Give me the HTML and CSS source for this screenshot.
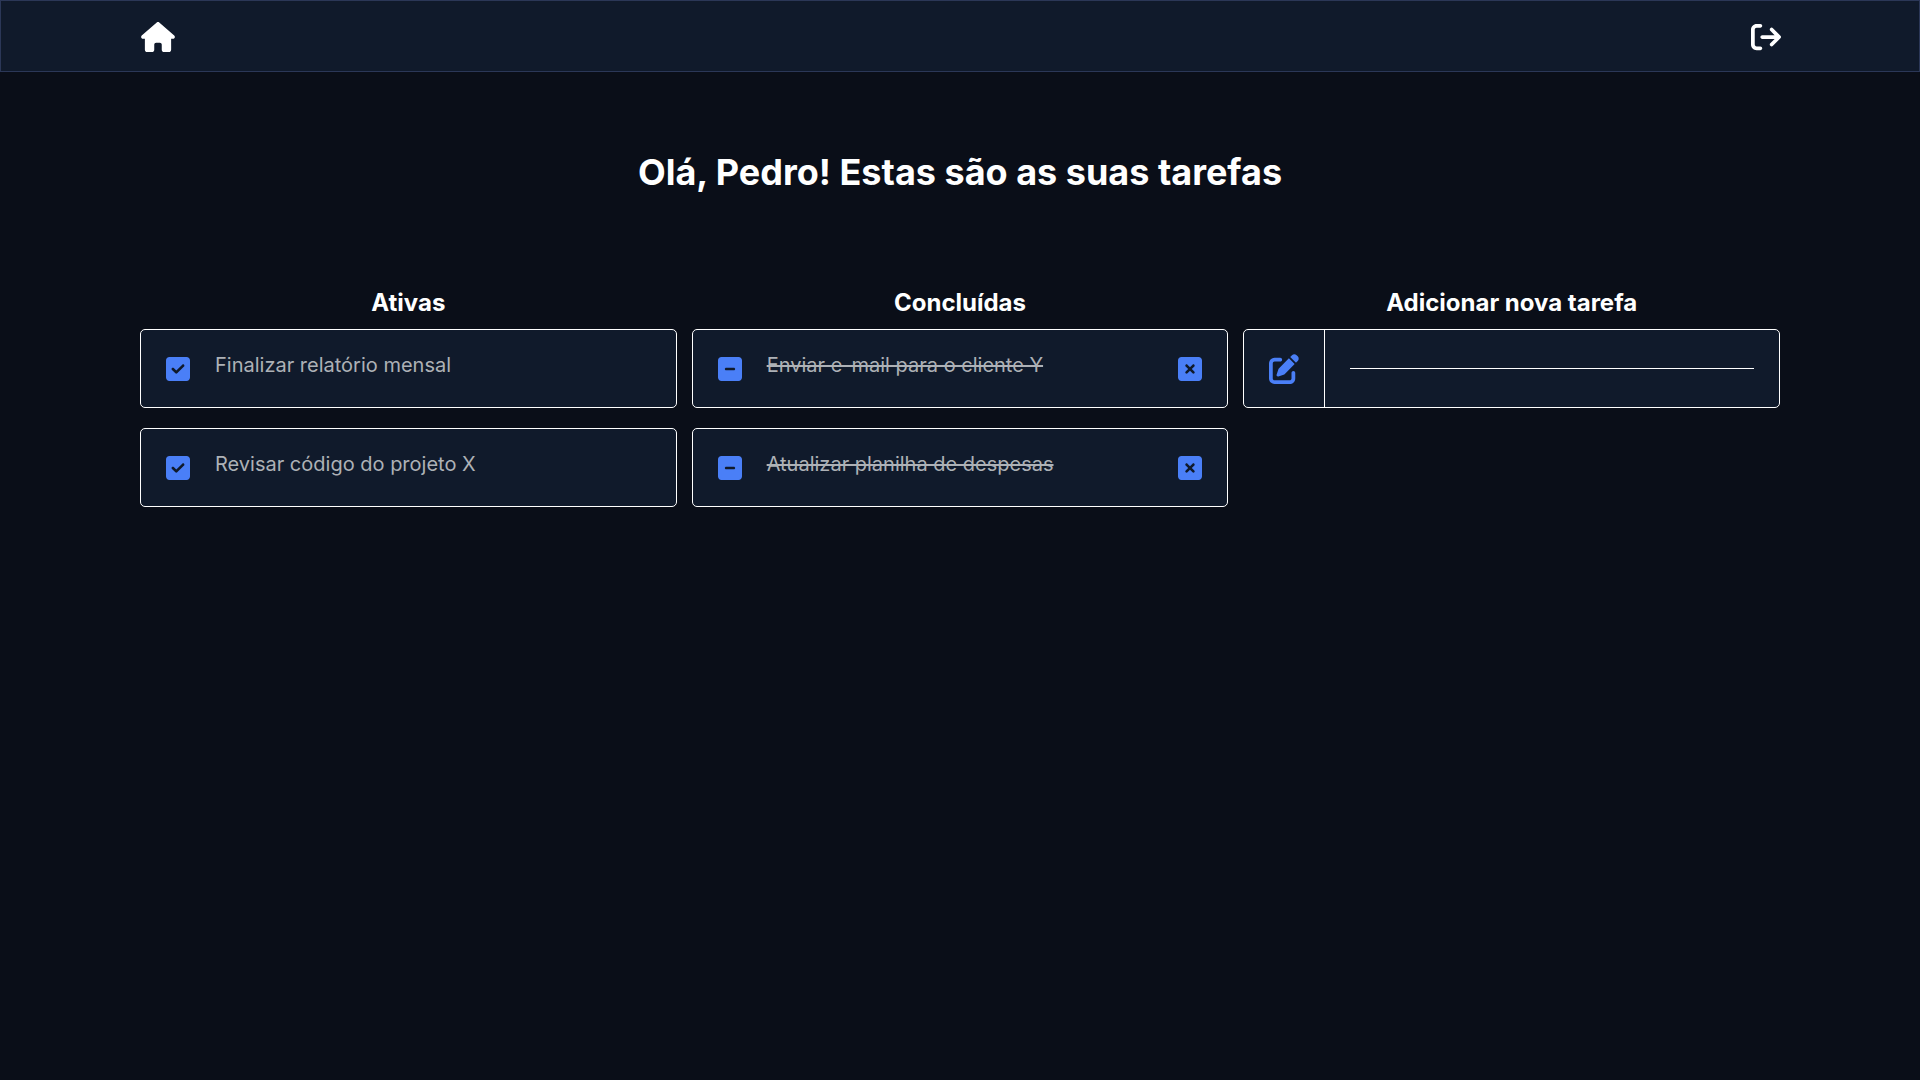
FILE: index.html
```html
<!DOCTYPE html>
<html lang="pt-BR">
<head>
<meta charset="utf-8">
<meta name="viewport" content="width=device-width, initial-scale=1">
<title>Tarefas</title>
<link rel="stylesheet" href="styles.css">
</head>
<body>
<svg class="sprite" aria-hidden="true">
  <symbol id="check" viewBox="0 32 448 448"><path d="M64 32C28.700 32 0 60.700 0 96V416c0 35.300 28.700 64 64 64H384c35.300 0 64-28.700 64-64V96c0-35.300-28.700-64-64-64H64zM337 209L209 337c-9.400 9.400-24.600 9.400-33.900 0l-64-64c-9.400-9.400-9.400-24.600 0-33.900s24.600-9.400 33.900 0l47 47L303 175c9.400-9.400 24.600-9.400 33.900 0s9.400 24.600 0 33.900z"/></symbol>
  <symbol id="minus" viewBox="0 32 448 448"><path d="M64 32C28.700 32 0 60.700 0 96V416c0 35.300 28.700 64 64 64H384c35.300 0 64-28.700 64-64V96c0-35.300-28.700-64-64-64H64zm88 200H296c13.300 0 24 10.700 24 24s-10.700 24-24 24H152c-13.300 0-24-10.700-24-24s10.700-24 24-24z"/></symbol>
  <symbol id="xmark" viewBox="0 32 448 448"><path d="M64 32C28.700 32 0 60.700 0 96V416c0 35.300 28.700 64 64 64H384c35.300 0 64-28.700 64-64V96c0-35.300-28.700-64-64-64H64zm79 143c9.400-9.400 24.600-9.400 33.900 0l47 47 47-47c9.400-9.400 24.600-9.400 33.900 0s9.400 24.600 0 33.900l-47 47 47 47c9.400 9.400 9.400 24.600 0 33.900s-24.600 9.400-33.900 0l-47-47-47 47c-9.400 9.400-24.600 9.400-33.900 0s-9.400-24.600 0-33.900l47-47-47-47c-9.400-9.400-9.400-24.600 0-33.900z"/></symbol>
</svg>

<header class="topbar">
  <a class="topbar-link" href="#" aria-label="Início">
    <svg class="icon-home" viewBox="0 0 576 512"><path d="M575.800 255.500c0 18-15 32.100-32 32.100h-32l.7 160.200c0 2.700-.2 5.400-.5 8.100V472c0 22.100-17.900 40-40 40H456c-1.100 0-2.200 0-3.300-.1c-1.400 .1-2.800 .1-4.200 .1H416 392c-22.100 0-40-17.900-40-40V448 384c0-17.700-14.300-32-32-32H256c-17.700 0-32 14.300-32 32v64 24c0 22.100-17.900 40-40 40H160 128.100c-1.500 0-3-.1-4.500-.2c-1.200 .1-2.400 .2-3.600 .2H104c-22.100 0-40-17.900-40-40V360c0-.9 0-1.900 .1-2.800V287.600H32c-18 0-32-14-32-32.100c0-9 3-17 10-24L266.400 8c7-7 15-8 22-8s15 2 21 7L564.800 231.500c8 7 12 15 11 24z"/></svg>
  </a>
  <a class="topbar-link" href="#" aria-label="Sair">
    <svg class="icon" viewBox="0 0 512 512"><path d="M502.600 278.600c12.500-12.500 12.500-32.800 0-45.300l-128-128c-12.500-12.500-32.800-12.500-45.300 0s-12.500 32.800 0 45.300L402.700 224 192 224c-17.700 0-32 14.300-32 32s14.300 32 32 32l210.700 0-73.400 73.400c-12.500 12.500-12.500 32.800 0 45.300s32.800 12.500 45.300 0l128-128zM160 96c17.700 0 32-14.300 32-32s-14.300-32-32-32L96 32C43 32 0 75 0 128L0 384c0 53 43 96 96 96l64 0c17.700 0 32-14.300 32-32s-14.300-32-32-32l-64 0c-17.700 0-32-14.300-32-32l0-256c0-17.700 14.300-32 32-32l64 0z"/></svg>
  </a>
</header>

<main class="page">
  <h1 class="greeting">Olá, Pedro! Estas são as suas tarefas</h1>
  <div class="board">
    <section class="column">
      <h2 class="column-title">Ativas</h2>
      <ul class="tasks">
        <li class="card task">
          <button class="task-button" type="button" aria-label="Concluir"><svg class="task-icon"><use href="#check"/></svg></button>
          <p class="task-text">Finalizar relatório mensal</p>
        </li>
        <li class="card task">
          <button class="task-button" type="button" aria-label="Concluir"><svg class="task-icon"><use href="#check"/></svg></button>
          <p class="task-text">Revisar código do projeto X</p>
        </li>
      </ul>
    </section>
    <section class="column">
      <h2 class="column-title">Concluídas</h2>
      <ul class="tasks">
        <li class="card task">
          <button class="task-button" type="button" aria-label="Reativar"><svg class="task-icon"><use href="#minus"/></svg></button>
          <p class="task-text"><s>Enviar e-mail para o cliente Y</s></p>
          <button class="task-button" type="button" aria-label="Excluir"><svg class="task-icon"><use href="#xmark"/></svg></button>
        </li>
        <li class="card task">
          <button class="task-button" type="button" aria-label="Reativar"><svg class="task-icon"><use href="#minus"/></svg></button>
          <p class="task-text"><s>Atualizar planilha de despesas</s></p>
          <button class="task-button" type="button" aria-label="Excluir"><svg class="task-icon"><use href="#xmark"/></svg></button>
        </li>
      </ul>
    </section>
    <section class="column">
      <h2 class="column-title"><label for="new-task">Adicionar nova tarefa</label></h2>
      <form class="card new-task">
        <button class="add-button" type="submit" aria-label="Adicionar">
          <svg class="icon" viewBox="0 0 512 512"><path d="M471.600 21.700c-21.900-21.900-57.300-21.900-79.200 0L362.300 51.700l97.900 97.900 30.100-30.100c21.900-21.900 21.900-57.300 0-79.200L471.600 21.700zm-299.200 220c-6.100 6.100-10.800 13.600-13.500 21.900l-29.600 88.800c-2.900 8.600-.6 18.100 5.800 24.600s15.900 8.700 24.600 5.800l88.800-29.600c8.200-2.700 15.700-7.400 21.900-13.500L437.700 172.300 339.700 74.300 172.400 241.700zM96 64C43 64 0 107 0 160L0 416c0 53 43 96 96 96l256 0c53 0 96-43 96-96l0-96c0-17.700-14.300-32-32-32s-32 14.300-32 32l0 96c0 17.700-14.300 32-32 32L96 448c-17.700 0-32-14.300-32-32l0-256c0-17.700 14.300-32 32-32l96 0c17.700 0 32-14.300 32-32s-14.300-32-32-32L96 64z"/></svg>
        </button>
        <div class="field">
          <input class="field-input" id="new-task" type="text">
        </div>
      </form>
    </section>
  </div>
</main>
</body>
</html>
```
FILE: styles.css
```css
:root {
  --bg: #0a0e18;
  --surface: #101a2b;
  --line: #2b3757;
  --accent: #4a7ff7;
  --muted: #adb1b6;
}

* {
  box-sizing: border-box;
  margin: 0;
  padding: 0;
}

body {
  background: var(--bg);
  color: #fff;
  font-family: Inter, "Liberation Sans", sans-serif;
  font-size: 20px;
}

button {
  background: none;
  border: 0;
  color: var(--accent);
  cursor: pointer;
}

svg {
  display: block;
  fill: currentColor;
}

.sprite {
  display: none;
}

.icon {
  width: 30px;
  height: 30px;
}

.icon-home {
  width: 34px;
  height: 30px;
}

.topbar {
  display: flex;
  justify-content: space-between;
  align-items: center;
  padding: 21px 138px 19px 140px;
  background: var(--surface);
  border: 1px solid var(--line);
}

.topbar-link {
  color: #fff;
}

.page {
  padding: 78px 140px;
}

.greeting {
  margin-bottom: 94px;
  font-size: 36px;
  font-weight: 700;
  line-height: 44px;
  text-align: center;
}

.board {
  display: grid;
  grid-template-columns: repeat(3, 1fr);
  gap: 15px;
}

.column-title {
  margin-bottom: 12px;
  font-size: 24px;
  font-weight: 700;
  line-height: 29px;
  text-align: center;
}

.tasks {
  display: grid;
  gap: 20px;
  list-style: none;
}

.card {
  display: flex;
  background: var(--surface);
  border: 1px solid #fff;
  border-radius: 5px;
}

.task {
  align-items: flex-start;
  gap: 25px;
  padding: 25px;
}

.task-button {
  padding: 2px 0 1px;
}

.task-icon {
  width: 24px;
  height: 24px;
}

.task-text {
  flex: 1;
  color: var(--muted);
  line-height: 20px;
}

.add-button {
  padding: 24px 25px 23px;
  border-right: 1px solid #fff;
}

.field {
  display: flex;
  flex: 1;
  align-items: flex-start;
  padding: 14px 25px;
}

.field-input {
  width: 100%;
  height: 25px;
  background: none;
  border: 0;
  border-bottom: 1px solid #fff;
  outline: 0;
  color: #fff;
  font: inherit;
}
```
